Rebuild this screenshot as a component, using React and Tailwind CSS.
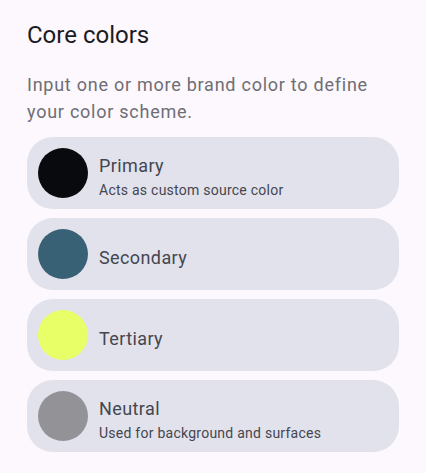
import React from 'react';

const colors = [
  { name: 'Primary', hint: 'Acts as custom source color', swatch: 'bg-[#090a0e]' },
  { name: 'Secondary', hint: null, swatch: 'bg-[#386175]' },
  { name: 'Tertiary', hint: null, swatch: 'bg-[#e8ff68]' },
  { name: 'Neutral', hint: 'Used for background and surfaces', swatch: 'bg-[#939296]' },
];

const ColorRow = ({ name, hint, swatch }) => (
  <div className="flex items-center h-[72px] rounded-[26px] bg-[#e1e2ec] pl-[11px]">
    <div className={`w-[50px] h-[50px] rounded-full shrink-0 ${swatch}`} />
    <div className="ml-[11px] pt-[7px] flex flex-col">
      <span className="text-[18px] leading-[24px] text-[#45464f] tracking-[0.4px]">{name}</span>
      {hint && (
        <span className="mt-[3px] text-[14px] leading-[18px] text-[#45464f] tracking-[0.25px]">{hint}</span>
      )}
    </div>
  </div>
);

export default function App() {
  return (
    <div className="w-[426px] h-[473px] bg-[#fcf8fd] px-[27px] pt-[19px] font-['Roboto',sans-serif]">
      <h2 className="text-[24px] leading-[32px] text-[#1b1b1f]">Core colors</h2>
      <p className="mt-[20px] text-[18px] leading-[27px] text-[#6e6e74] tracking-[0.75px] w-[372px]">
        Input one or more brand color to define your color scheme.
      </p>
      <div className="mt-[12px] flex flex-col gap-[9px] w-[372px]">
        {colors.map((c) => (
          <ColorRow key={c.name} {...c} />
        ))}
      </div>
    </div>
  );
}
